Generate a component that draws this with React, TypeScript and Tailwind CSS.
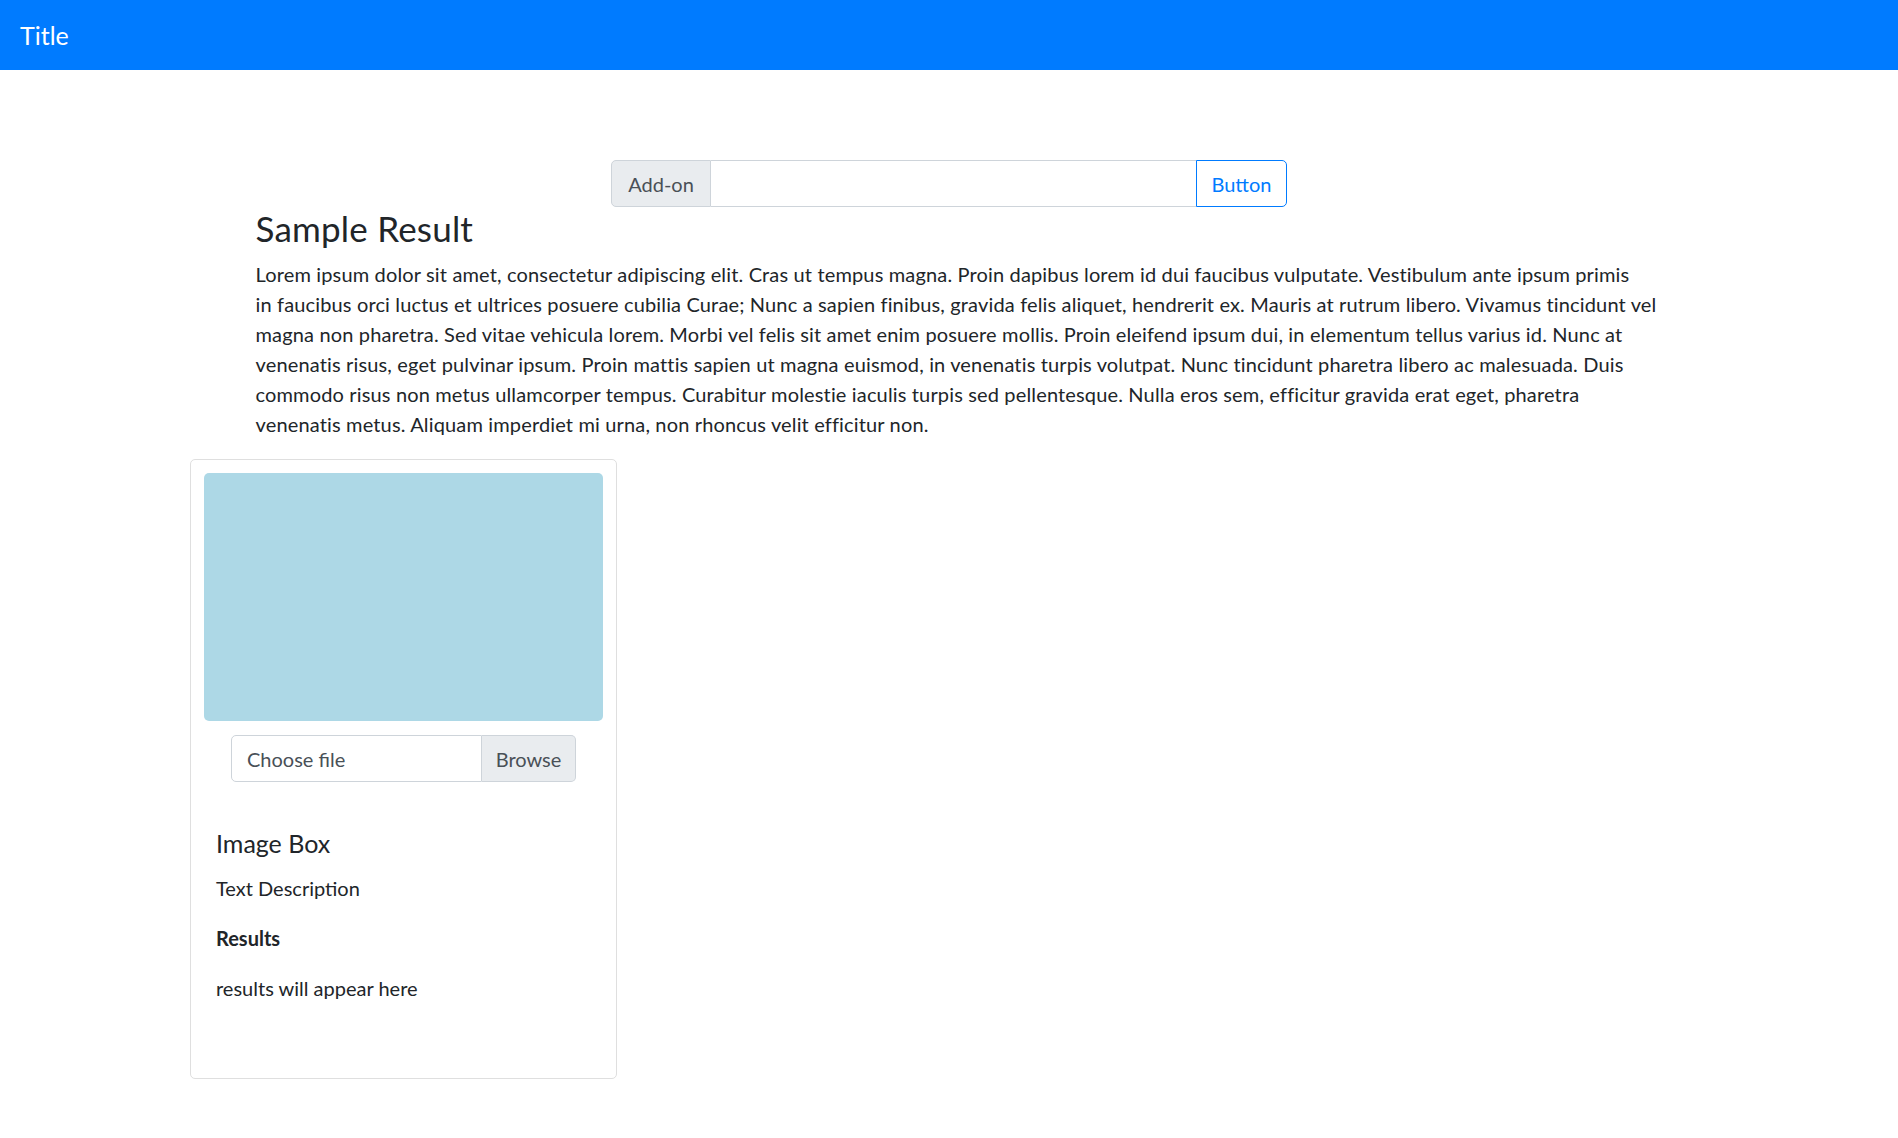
const lines = [
  "Lorem ipsum dolor sit amet, consectetur adipiscing elit. Cras ut tempus magna. Proin dapibus lorem id dui faucibus vulputate. Vestibulum ante ipsum primis",
  "in faucibus orci luctus et ultrices posuere cubilia Curae; Nunc a sapien finibus, gravida felis aliquet, hendrerit ex. Mauris at rutrum libero. Vivamus tincidunt vel",
  "magna non pharetra. Sed vitae vehicula lorem. Morbi vel felis sit amet enim posuere mollis. Proin eleifend ipsum dui, in elementum tellus varius id. Nunc at",
  "venenatis risus, eget pulvinar ipsum. Proin mattis sapien ut magna euismod, in venenatis turpis volutpat. Nunc tincidunt pharetra libero ac malesuada. Duis",
  "commodo risus non metus ullamcorper tempus. Curabitur molestie iaculis turpis sed pellentesque. Nulla eros sem, efficitur gravida erat eget, pharetra",
  "venenatis metus. Aliquam imperdiet mi urna, non rhoncus velit efficitur non.",
]

const App = () => {
  return (
    <div className="min-h-[1138px] bg-white text-[#212529] font-['Lato',sans-serif]">
      <nav className="h-[70px] bg-[#007bff] flex items-center px-[20px]">
        <span className="text-white text-[25px] leading-[37px]">Title</span>
      </nav>

      <div className="pt-[90px] flex justify-center">
        <div className="w-[676px] h-[47px] flex text-[20px]">
          <div className="w-[100px] flex items-center justify-center bg-[#e9ecef] text-[#495057] border border-[#ced4da] rounded-l-[5px]">
            Add-on
          </div>
          <div className="flex-grow border-y border-[#ced4da] bg-white"></div>
          <button className="w-[91px] flex items-center justify-center border border-[#007bff] text-[#007bff] rounded-r-[5px]">
            Button
          </button>
        </div>
      </div>

      <div className="mx-auto w-[1425px] px-[19px]">
        <h3 className="text-[35px] leading-[42px] mb-[10px] tracking-[0.2px]">Sample Result</h3>
        <p className="text-[20px] leading-[30px] mb-[20px] whitespace-nowrap tracking-[0.15px]">
          {lines.map((l, i) => (
            <span key={i} className="block">{l}</span>
          ))}
        </p>
      </div>

      <div className="pl-[190px]">
        <div className="w-[427px] h-[620px] border border-[#dfdfdf] rounded-[5px] p-[13px] flex flex-col">
          <div className="h-[248px] bg-[#add8e6] rounded-[5px]"></div>
          <div className="mt-[14px] mx-auto w-[345px] h-[47px] flex text-[20px] text-[#495057]">
            <div className="flex-grow flex items-center pl-[15px] border border-[#ced4da] rounded-l-[5px] bg-white">
              Choose file
            </div>
            <div className="w-[94px] flex items-center justify-center bg-[#e9ecef] border border-l-0 border-[#ced4da] rounded-r-[5px]">
              Browse
            </div>
          </div>
          <div className="px-[12px] pt-[46px]">
            <h5 className="text-[25px] leading-[30px] mb-[15px]">Image Box</h5>
            <p className="text-[20px] leading-[30px] mb-[20px]">Text Description</p>
            <p className="text-[20px] leading-[30px] mb-[20px] font-bold">Results</p>
            <p className="text-[20px] leading-[30px]">results will appear here</p>
          </div>
        </div>
      </div>
    </div>
  )
}

export default App
